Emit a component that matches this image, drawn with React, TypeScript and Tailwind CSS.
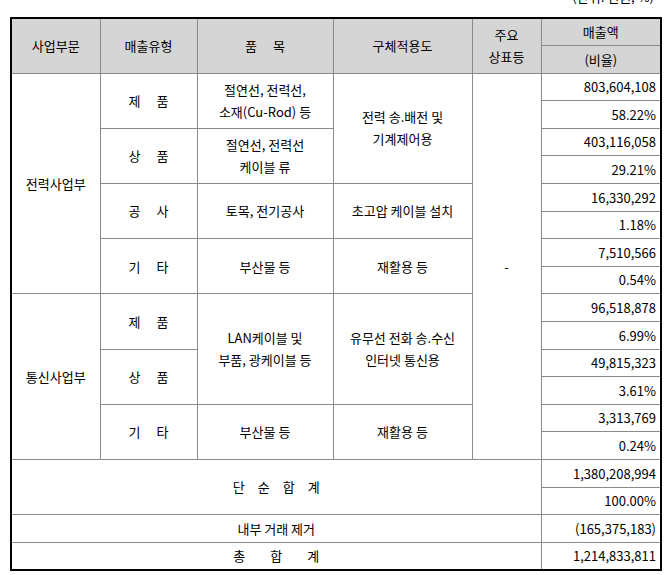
import React from 'react';

const font = { fontFamily: '"Noto Sans CJK KR", "Noto Sans", sans-serif' };

const cell = 'border border-[#8a8a8a] text-center align-middle px-1';
const num = 'border border-[#8a8a8a] text-right align-middle pr-[4px] tabular-nums';

function Spaced({ chars, gap }: { chars: string[]; gap: string }) {
  return (
    <span className={`inline-flex justify-center ${gap}`}>
      {chars.map((c, i) => (
        <span key={i}>{c}</span>
      ))}
    </span>
  );
}

function Lines({ lines }: { lines: string[] }) {
  return (
    <div className="leading-[22px]">
      {lines.map((l, i) => (
        <div key={i}>{l}</div>
      ))}
    </div>
  );
}

export default function App() {
  const tr = 'h-[27.6px]';
  return (
    <div className="min-h-screen bg-white text-[13px] text-black" style={font}>
      {/* 단위 */}
      <div className="h-[17px] w-[650px] ml-[10px] overflow-hidden">
        <p className="-mt-[11px] text-right pr-[6px] leading-[16px] text-[13px]">(단위: 천원, %)</p>
      </div>

      <table className="ml-[10px] w-[650px] table-fixed border-collapse border-2 border-black">
        <colgroup>
          <col className="w-[89px]" />
          <col className="w-[97px]" />
          <col className="w-[136px]" />
          <col className="w-[139px]" />
          <col className="w-[69px]" />
          <col className="w-[120px]" />
        </colgroup>
        <thead className="bg-[#d5d5d5]">
          <tr className={tr}>
            <th rowSpan={2} className={`${cell} font-normal`}>사업부문</th>
            <th rowSpan={2} className={`${cell} font-normal`}>매출유형</th>
            <th rowSpan={2} className={`${cell} font-normal`}>
              <Spaced chars={['품', '목']} gap="gap-[16px]" />
            </th>
            <th rowSpan={2} className={`${cell} font-normal`}>구체적용도</th>
            <th rowSpan={2} className={`${cell} font-normal`}>
              <Lines lines={['주요', '상표등']} />
            </th>
            <th className={`${cell} font-normal`}>매출액</th>
          </tr>
          <tr className={tr}>
            <th className={`${cell} font-normal`}>(비율)</th>
          </tr>
        </thead>
        <tbody>
          {/* 전력사업부 */}
          <tr className={tr}>
            <td rowSpan={8} className={cell}>전력사업부</td>
            <td rowSpan={2} className={cell}>
              <Spaced chars={['제', '품']} gap="gap-[16px]" />
            </td>
            <td rowSpan={2} className={cell}>
              <Lines lines={['절연선, 전력선,', '소재(Cu-Rod) 등']} />
            </td>
            <td rowSpan={4} className={cell}>
              <Lines lines={['전력 송.배전 및', '기계제어용']} />
            </td>
            <td rowSpan={14} className={cell}>-</td>
            <td className={num}>803,604,108</td>
          </tr>
          <tr className={tr}>
            <td className={num}>58.22%</td>
          </tr>
          <tr className={tr}>
            <td rowSpan={2} className={cell}>
              <Spaced chars={['상', '품']} gap="gap-[16px]" />
            </td>
            <td rowSpan={2} className={cell}>
              <Lines lines={['절연선, 전력선', '케이블 류']} />
            </td>
            <td className={num}>403,116,058</td>
          </tr>
          <tr className={tr}>
            <td className={num}>29.21%</td>
          </tr>
          <tr className={tr}>
            <td rowSpan={2} className={cell}>
              <Spaced chars={['공', '사']} gap="gap-[16px]" />
            </td>
            <td rowSpan={2} className={cell}>토목, 전기공사</td>
            <td rowSpan={2} className={cell}>초고압 케이블 설치</td>
            <td className={num}>16,330,292</td>
          </tr>
          <tr className={tr}>
            <td className={num}>1.18%</td>
          </tr>
          <tr className={tr}>
            <td rowSpan={2} className={cell}>
              <Spaced chars={['기', '타']} gap="gap-[16px]" />
            </td>
            <td rowSpan={2} className={cell}>부산물 등</td>
            <td rowSpan={2} className={cell}>재활용 등</td>
            <td className={num}>7,510,566</td>
          </tr>
          <tr className={tr}>
            <td className={num}>0.54%</td>
          </tr>

          {/* 통신사업부 */}
          <tr className={tr}>
            <td rowSpan={6} className={cell}>통신사업부</td>
            <td rowSpan={2} className={cell}>
              <Spaced chars={['제', '품']} gap="gap-[16px]" />
            </td>
            <td rowSpan={4} className={cell}>
              <Lines lines={['LAN케이블 및', '부품, 광케이블 등']} />
            </td>
            <td rowSpan={4} className={cell}>
              <Lines lines={['유무선 전화 송.수신', '인터넷 통신용']} />
            </td>
            <td className={num}>96,518,878</td>
          </tr>
          <tr className={tr}>
            <td className={num}>6.99%</td>
          </tr>
          <tr className={tr}>
            <td rowSpan={2} className={cell}>
              <Spaced chars={['상', '품']} gap="gap-[16px]" />
            </td>
            <td className={num}>49,815,323</td>
          </tr>
          <tr className={tr}>
            <td className={num}>3.61%</td>
          </tr>
          <tr className={tr}>
            <td rowSpan={2} className={cell}>
              <Spaced chars={['기', '타']} gap="gap-[16px]" />
            </td>
            <td rowSpan={2} className={cell}>부산물 등</td>
            <td rowSpan={2} className={cell}>재활용 등</td>
            <td className={num}>3,313,769</td>
          </tr>
          <tr className={tr}>
            <td className={num}>0.24%</td>
          </tr>

          {/* 합계 */}
          <tr className={tr}>
            <td rowSpan={2} colSpan={5} className={cell}>
              <Spaced chars={['단', '순', '합', '계']} gap="gap-[13px]" />
            </td>
            <td className={num}>1,380,208,994</td>
          </tr>
          <tr className={tr}>
            <td className={num}>100.00%</td>
          </tr>
          <tr className={tr}>
            <td colSpan={5} className={cell}>내부 거래 제거</td>
            <td className={num}>(165,375,183)</td>
          </tr>
          <tr className={tr}>
            <td colSpan={5} className={cell}>
              <Spaced chars={['총', '합', '계']} gap="gap-[25px]" />
            </td>
            <td className={num}>1,214,833,811</td>
          </tr>
        </tbody>
      </table>
    </div>
  );
}
